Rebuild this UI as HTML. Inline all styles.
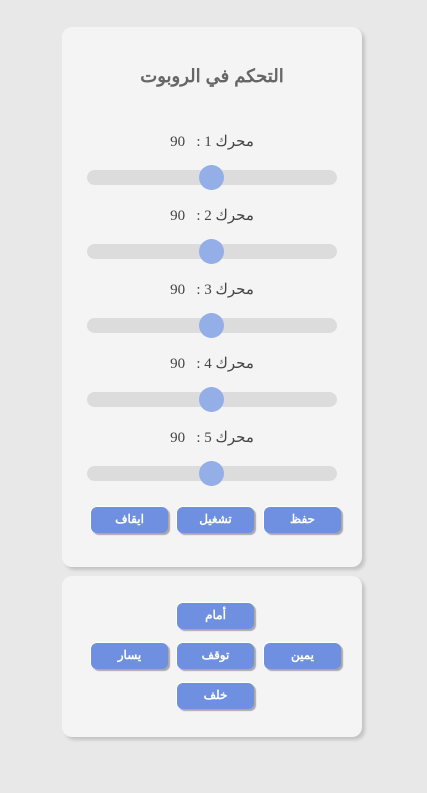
<!DOCTYPE html>
<html><head><meta charset="utf-8"><style>
body{margin:0;width:427px;height:793px;background:#e8e8e8;position:relative;font-family:"Liberation Sans","Noto Sans CJK SC",sans-serif;overflow:hidden}
.card{position:absolute;left:62px;width:300px;background:#f4f4f4;border-radius:10px;box-shadow:3px 3px 3px #c4c4c4}
.title{position:absolute;left:0;width:100%;top:39px;text-align:center;font-size:18px;font-weight:bold;color:#666;direction:rtl}
.lab{position:absolute;left:0;width:100%;text-align:center;font-family:"Liberation Serif","DejaVu Serif",serif;font-size:15px;color:#444;direction:rtl}
.track{position:absolute;left:25px;width:250px;height:15px;background:#dcdcdc;border-radius:8px}
.thumb{position:absolute;left:112px;top:-5px;width:25px;height:25px;border-radius:50%;background:#94aee8}
.btn{position:absolute;width:77px;height:26px;background:#6f8fe0;border-radius:6px;color:#fff;font-size:12px;font-weight:bold;text-align:center;line-height:25px;box-shadow:-1px -1px 0 #fff,2px 2px 1px #a8a8a8;direction:rtl}
</style></head><body>
<div class="card" style="top:27px;height:540px">
<div class="title">التحكم في الروبوت</div>
<div class="lab" style="top:105px">محرك 1 :&nbsp;&nbsp; 90</div>
<div class="track" style="top:143px"><div class="thumb"></div></div>
<div class="lab" style="top:179px">محرك 2 :&nbsp;&nbsp; 90</div>
<div class="track" style="top:217px"><div class="thumb"></div></div>
<div class="lab" style="top:253px">محرك 3 :&nbsp;&nbsp; 90</div>
<div class="track" style="top:291px"><div class="thumb"></div></div>
<div class="lab" style="top:327px">محرك 4 :&nbsp;&nbsp; 90</div>
<div class="track" style="top:365px"><div class="thumb"></div></div>
<div class="lab" style="top:401px">محرك 5 :&nbsp;&nbsp; 90</div>
<div class="track" style="top:439px"><div class="thumb"></div></div>
<div class="btn" style="left:29px;top:480px">ايقاف</div>
<div class="btn" style="left:115px;top:480px">تشغيل</div>
<div class="btn" style="left:202px;top:480px">حفظ</div>
</div>
<div class="card" style="top:576px;height:161px">
<div class="btn" style="left:115px;top:27px">أمام</div>
<div class="btn" style="left:29px;top:67px">يسار</div>
<div class="btn" style="left:115px;top:67px">توقف</div>
<div class="btn" style="left:202px;top:67px">يمين</div>
<div class="btn" style="left:115px;top:107px">خلف</div>
</div>
</body></html>
